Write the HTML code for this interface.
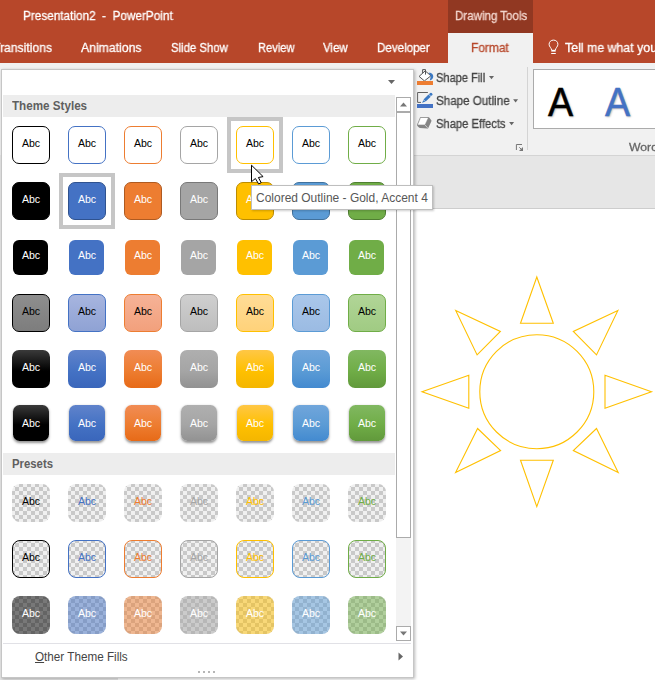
<!DOCTYPE html>
<html><head><meta charset="utf-8">
<style>
*{box-sizing:border-box;margin:0;padding:0}
html,body{width:655px;height:680px;overflow:hidden;background:#fff}
body{font-family:"Liberation Sans",sans-serif;position:relative;color:#444}
.abs{position:absolute}
#title{left:0;top:0;width:655px;height:63px;background:#B7472A}
.t{position:absolute;white-space:nowrap;transform-origin:0 0}
.t.g{will-change:transform;-webkit-text-stroke:0.3px}
#dt{left:448px;top:0;width:85px;height:33px;background:#913822}
#fmt{left:448px;top:33px;width:85px;height:31px;background:#f1f1f1}
#ribbon{left:0;top:63px;width:655px;height:93px;background:#f1f1f1;border-bottom:1px solid #d4d4d4}
#below{left:0;top:156px;width:655px;height:53px;background:#e6e6e6}
#slide{left:118px;top:208px;width:537px;height:472px;background:#fff;border-top:1px solid #cdcdcd}
#leftpane{left:0;top:155px;width:118px;height:525px;background:#e6e6e6}
.rt{position:absolute;font-size:12px;line-height:14px;color:#444;white-space:nowrap}
#popup{left:1px;top:69px;width:413px;height:609px;background:#fff;border:1px solid #c6c6c6;box-shadow:1px 1px 3px rgba(0,0,0,.28)}
.band{position:absolute;left:3px;width:392px;height:22px;background:#ededed;color:#5f5f5f;font-weight:bold;font-size:12px;line-height:22px;padding-left:9px}
.c{position:absolute;width:38px;height:38px}
.c b{position:absolute;left:0;top:0;width:38px;height:38px;border-radius:7px;overflow:hidden;font-weight:normal}
.c span{position:absolute;left:0;top:0;width:38px;text-align:center;font-size:11px;line-height:34px;transform:scaleX(0.9595)}
.c b.ck{border-radius:8px;background-color:#f0f0f0;background-image:linear-gradient(45deg,#c9c9c9 25%,transparent 25%,transparent 75%,#c9c9c9 75%),linear-gradient(45deg,#c9c9c9 25%,transparent 25%,transparent 75%,#c9c9c9 75%);background-size:8px 8px;background-position:3px -1px,7px 3px;background-origin:border-box}
.c i{position:absolute;left:0;top:0;right:0;bottom:0}
.hov{position:absolute;width:56px;height:56px;border:4px solid #c6c6c6;background:#fff}
</style></head><body>
<div id="title" class="abs"></div>
<div id="dt" class="abs"></div>
<div id="fmt" class="abs"></div>
<div id="ribbon" class="abs"></div>
<div id="below" class="abs"></div>
<div id="leftpane" class="abs"></div>
<div id="slide" class="abs"></div>

<div class="abs" style="left:527px;top:67px;width:1px;height:83px;background:#d4d4d4"></div>
<div class="abs" style="left:533px;top:69px;width:130px;height:60px;background:#fff;border:1px solid #ababab"></div>
<div class="abs" style="left:547.6px;top:79px;font-size:40px;line-height:46px;color:#000;-webkit-text-stroke:0.5px #000;text-shadow:1px 1px 2px rgba(0,0,0,.3);transform:scaleX(.94);transform-origin:0 0">A</div>
<div class="abs" style="left:604.8px;top:79px;font-size:40px;line-height:46px;color:#4472C4;-webkit-text-stroke:0.5px #4472C4;text-shadow:1px 1px 2px rgba(0,0,0,.3);transform:scaleX(.94);transform-origin:0 0">A</div>


<!-- ribbon icons -->
<svg class="abs" style="left:415px;top:67px" width="22" height="64" viewBox="415 67 22 64">
<!-- shape fill -->
<polygon points="425.2,70.9 430.9,75.8 424.4,80.9 419.1,76.4" fill="#fff" stroke="#555" stroke-width="1" stroke-linejoin="round"/>
<path d="M422.6,73.2 L422.6,69.6 L425.5,69.6 L425.5,74.6" fill="none" stroke="#555" stroke-width="1"/>
<path d="M428.6,72.8 C431.8,72.6 433.6,74.8 433.2,77 C432.9,78.8 431.6,79.9 429.8,80.5 C430.2,78.6 430.5,77.6 430.8,76 Z" fill="#3a78c3"/>
<rect x="417" y="81" width="16" height="4" fill="#ED7D31"/>
<!-- shape outline -->
<path d="M427.9,92.5 L417.6,92.5 L417.6,102.4 L421,102.4" fill="none" stroke="#606060" stroke-width="1"/>
<path d="M421.9,102.8 L423.7,99.9 L425.2,101.7 Z" fill="#3a78c3"/>
<path d="M424.6,100.5 L429.6,95.6" stroke="#3a78c3" stroke-width="3.1" fill="none"/>
<circle cx="430.9" cy="94.2" r="1.55" fill="#3a78c3"/>
<rect x="417" y="104" width="16" height="4" fill="#4472C4"/>
<!-- shape effects -->
<path d="M417.2,124.2 L420,117.6 Q420.3,117 421,117 L428,117 Q428.7,117 429.2,117.6 L431.3,120.3 Q431.7,120.8 431.3,121.5 L428.3,127.9 Q428,128.6 427.3,128.5 L419.8,127.9 Q419,127.8 418.3,127 L417.3,125.7 Q416.8,125 417.2,124.2 Z" fill="#858585"/>
<path d="M418.1,124.5 L420.8,118 L427.8,118 L424.8,124.5 Z" fill="#fff" stroke="#fff" stroke-width="0.4" stroke-linejoin="round"/>
<path d="M425.1,125 L427.7,127.9" stroke="#e8e8e8" stroke-width="0.7"/>
</svg>
<svg class="abs" style="left:486px;top:70px" width="36" height="60" viewBox="486 70 36 60" fill="#666">
<polygon points="489,76 494,76 491.5,79.2"/>
<polygon points="513.1,99.2 518.1,99.2 515.6,102.4"/>
<polygon points="509.1,122 514.1,122 511.6,125.2"/>
</svg>
<svg class="abs" style="left:515px;top:143px" width="10" height="10" viewBox="515 143 10 10" fill="none" stroke="#777" stroke-width="1">
<path d="M516.4,150 L516.4,144.5 L522,144.5"/>
<path d="M519.3,147.3 L521.5,149.5" />
<path d="M523,147 L523,151 L519,151 Z" fill="#777" stroke="none"/>
</svg>
<!-- lightbulb -->
<svg class="abs" style="left:546px;top:37px" width="16" height="20" viewBox="546 37 16 20" fill="none" stroke="#fff" stroke-width="1">
<path d="M551.6,50 C551.4,47.8 549.1,46.8 549.1,44.3 C549.1,41.8 551,40.1 553.5,40.1 C556,40.1 557.9,41.8 557.9,44.3 C557.9,46.8 555.6,47.8 555.4,50"/>
<rect x="551.3" y="49.8" width="4.4" height="1.8" fill="#fff" stroke="none"/>
<path d="M551.2,53.5 L555.8,53.5"/>
</svg>
<svg class="abs" style="left:400px;top:260px" width="255" height="260" viewBox="400 260 255 260" fill="none" stroke="#FFC000" stroke-width="1.1">
<circle cx="536.8" cy="391.7" r="57"/>
<polygon points="536.8,277 520.5,323.3 553.3,323.3"/>
<polygon points="536.8,506.6 520.5,460.3 553.3,460.3"/>
<polygon points="422,391.7 468.8,375.3 468.8,408.2"/>
<polygon points="651.5,391.7 605,375.3 605,408.2"/>
<polygon points="455.7,310.5 500.4,331.5 477.1,354.9"/>
<polygon points="617.9,310.5 573.3,331.5 596.5,354.9"/>
<polygon points="455.6,472.6 500.6,450.6 477.6,428.5"/>
<polygon points="618.2,472.6 573.3,450.6 596.5,428.5"/>
</svg>

<div id="popup" class="abs"></div>
<div class="band" style="top:95px"></div>
<div class="band" style="top:453px"></div>
<div class="hov" style="left:227px;top:117px"></div>
<div class="hov" style="left:59px;top:173px"></div>
<div class="c" style="left:12px;top:126px"><b class="" style="background:#fff;border:1px solid #000000"></b><span style="color:#000">Abc</span></div>
<div class="c" style="left:68px;top:126px"><b class="" style="background:#fff;border:1px solid #4472C4"></b><span style="color:#000">Abc</span></div>
<div class="c" style="left:124px;top:126px"><b class="" style="background:#fff;border:1px solid #ED7D31"></b><span style="color:#000">Abc</span></div>
<div class="c" style="left:180px;top:126px"><b class="" style="background:#fff;border:1px solid #A5A5A5"></b><span style="color:#000">Abc</span></div>
<div class="c" style="left:236px;top:126px"><b class="" style="background:#fff;border:1px solid #FFC000"></b><span style="color:#000">Abc</span></div>
<div class="c" style="left:292px;top:126px"><b class="" style="background:#fff;border:1px solid #5B9BD5"></b><span style="color:#000">Abc</span></div>
<div class="c" style="left:348px;top:126px"><b class="" style="background:#fff;border:1px solid #70AD47"></b><span style="color:#000">Abc</span></div>
<div class="c" style="left:12px;top:182px"><b class="" style="background:#000000;border:1px solid #000000"></b><span style="color:#fff">Abc</span></div>
<div class="c" style="left:68px;top:182px"><b class="" style="background:#4472C4;border:1px solid #2F528F"></b><span style="color:#fff">Abc</span></div>
<div class="c" style="left:124px;top:182px"><b class="" style="background:#ED7D31;border:1px solid #AE5A21"></b><span style="color:#fff">Abc</span></div>
<div class="c" style="left:180px;top:182px"><b class="" style="background:#A5A5A5;border:1px solid #787878"></b><span style="color:#fff">Abc</span></div>
<div class="c" style="left:236px;top:182px"><b class="" style="background:#FFC000;border:1px solid #BC8C00"></b><span style="color:#fff">Abc</span></div>
<div class="c" style="left:292px;top:182px"><b class="" style="background:#5B9BD5;border:1px solid #41719C"></b><span style="color:#fff">Abc</span></div>
<div class="c" style="left:348px;top:182px"><b class="" style="background:#70AD47;border:1px solid #507E32"></b><span style="color:#fff">Abc</span></div>
<div class="c" style="left:12px;top:238px"><b class="" style="left:1.2px;top:1.7px;width:35.3px;height:35px;border-radius:6px;background:#000000"></b><span style="color:#fff">Abc</span></div>
<div class="c" style="left:68px;top:238px"><b class="" style="left:1.2px;top:1.7px;width:35.3px;height:35px;border-radius:6px;background:#4472C4"></b><span style="color:#fff">Abc</span></div>
<div class="c" style="left:124px;top:238px"><b class="" style="left:1.2px;top:1.7px;width:35.3px;height:35px;border-radius:6px;background:#ED7D31"></b><span style="color:#fff">Abc</span></div>
<div class="c" style="left:180px;top:238px"><b class="" style="left:1.2px;top:1.7px;width:35.3px;height:35px;border-radius:6px;background:#A5A5A5"></b><span style="color:#fff">Abc</span></div>
<div class="c" style="left:236px;top:238px"><b class="" style="left:1.2px;top:1.7px;width:35.3px;height:35px;border-radius:6px;background:#FFC000"></b><span style="color:#fff">Abc</span></div>
<div class="c" style="left:292px;top:238px"><b class="" style="left:1.2px;top:1.7px;width:35.3px;height:35px;border-radius:6px;background:#5B9BD5"></b><span style="color:#fff">Abc</span></div>
<div class="c" style="left:348px;top:238px"><b class="" style="left:1.2px;top:1.7px;width:35.3px;height:35px;border-radius:6px;background:#70AD47"></b><span style="color:#fff">Abc</span></div>
<div class="c" style="left:12px;top:294px"><b class="" style="background:linear-gradient(#8e8e8e,#7d7d7d);border:1px solid #000000"></b><span style="color:#000">Abc</span></div>
<div class="c" style="left:68px;top:294px"><b class="" style="background:linear-gradient(#a7b5df,#8fa2d4);border:1px solid #4472C4"></b><span style="color:#000">Abc</span></div>
<div class="c" style="left:124px;top:294px"><b class="" style="background:linear-gradient(#f6b297,#f2a07c);border:1px solid #ED7D31"></b><span style="color:#000">Abc</span></div>
<div class="c" style="left:180px;top:294px"><b class="" style="background:linear-gradient(#cfcfcf,#bdbdbd);border:1px solid #A5A5A5"></b><span style="color:#000">Abc</span></div>
<div class="c" style="left:236px;top:294px"><b class="" style="background:linear-gradient(#ffdc96,#ffd27a);border:1px solid #FFC000"></b><span style="color:#000">Abc</span></div>
<div class="c" style="left:292px;top:294px"><b class="" style="background:linear-gradient(#aac7ea,#9bbbe3);border:1px solid #5B9BD5"></b><span style="color:#000">Abc</span></div>
<div class="c" style="left:348px;top:294px"><b class="" style="background:linear-gradient(#b1d597,#a0cb83);border:1px solid #70AD47"></b><span style="color:#000">Abc</span></div>
<div class="c" style="left:12px;top:350px"><b class="" style="background:linear-gradient(#3a3a3a 0%,#000 55%,#000000 100%)"></b><span style="color:#fff">Abc</span></div>
<div class="c" style="left:68px;top:350px"><b class="" style="background:linear-gradient(#6083cb 0%,#4472C4 55%,#3a66bb 100%)"></b><span style="color:#fff">Abc</span></div>
<div class="c" style="left:124px;top:350px"><b class="" style="background:linear-gradient(#f18c55 0%,#ED7D31 55%,#e76a17 100%)"></b><span style="color:#fff">Abc</span></div>
<div class="c" style="left:180px;top:350px"><b class="" style="background:linear-gradient(#afafaf 0%,#A5A5A5 55%,#929292 100%)"></b><span style="color:#fff">Abc</span></div>
<div class="c" style="left:236px;top:350px"><b class="" style="background:linear-gradient(#ffc746 0%,#FFC000 55%,#f4b600 100%)"></b><span style="color:#fff">Abc</span></div>
<div class="c" style="left:292px;top:350px"><b class="" style="background:linear-gradient(#71a6db 0%,#5B9BD5 55%,#438ad0 100%)"></b><span style="color:#fff">Abc</span></div>
<div class="c" style="left:348px;top:350px"><b class="" style="background:linear-gradient(#81b861 0%,#70AD47 55%,#61993b 100%)"></b><span style="color:#fff">Abc</span></div>
<div class="c" style="left:12px;top:406px"><b class="" style="left:0.6px;top:-1px;width:36.8px;height:36px;border-radius:6.5px;background:linear-gradient(#3a3a3a 0%,#000 55%,#000000 100%);box-shadow:0 1.5px 2.5px rgba(0,0,0,.42)"></b><span style="color:#fff">Abc</span></div>
<div class="c" style="left:68px;top:406px"><b class="" style="left:0.6px;top:-1px;width:36.8px;height:36px;border-radius:6.5px;background:linear-gradient(#6083cb 0%,#4472C4 55%,#3a66bb 100%);box-shadow:0 1.5px 2.5px rgba(0,0,0,.42)"></b><span style="color:#fff">Abc</span></div>
<div class="c" style="left:124px;top:406px"><b class="" style="left:0.6px;top:-1px;width:36.8px;height:36px;border-radius:6.5px;background:linear-gradient(#f18c55 0%,#ED7D31 55%,#e76a17 100%);box-shadow:0 1.5px 2.5px rgba(0,0,0,.42)"></b><span style="color:#fff">Abc</span></div>
<div class="c" style="left:180px;top:406px"><b class="" style="left:0.6px;top:-1px;width:36.8px;height:36px;border-radius:6.5px;background:linear-gradient(#afafaf 0%,#A5A5A5 55%,#929292 100%);box-shadow:0 1.5px 2.5px rgba(0,0,0,.42)"></b><span style="color:#fff">Abc</span></div>
<div class="c" style="left:236px;top:406px"><b class="" style="left:0.6px;top:-1px;width:36.8px;height:36px;border-radius:6.5px;background:linear-gradient(#ffc746 0%,#FFC000 55%,#f4b600 100%);box-shadow:0 1.5px 2.5px rgba(0,0,0,.42)"></b><span style="color:#fff">Abc</span></div>
<div class="c" style="left:292px;top:406px"><b class="" style="left:0.6px;top:-1px;width:36.8px;height:36px;border-radius:6.5px;background:linear-gradient(#71a6db 0%,#5B9BD5 55%,#438ad0 100%);box-shadow:0 1.5px 2.5px rgba(0,0,0,.42)"></b><span style="color:#fff">Abc</span></div>
<div class="c" style="left:348px;top:406px"><b class="" style="left:0.6px;top:-1px;width:36.8px;height:36px;border-radius:6.5px;background:linear-gradient(#81b861 0%,#70AD47 55%,#61993b 100%);box-shadow:0 1.5px 2.5px rgba(0,0,0,.42)"></b><span style="color:#fff">Abc</span></div>
<div class="c" style="left:12px;top:484px"><b class="ck" style=""></b><span style="color:#000000">Abc</span></div>
<div class="c" style="left:68px;top:484px"><b class="ck" style=""></b><span style="color:#4472C4">Abc</span></div>
<div class="c" style="left:124px;top:484px"><b class="ck" style=""></b><span style="color:#ED7D31">Abc</span></div>
<div class="c" style="left:180px;top:484px"><b class="ck" style=""></b><span style="color:#A5A5A5">Abc</span></div>
<div class="c" style="left:236px;top:484px"><b class="ck" style=""></b><span style="color:#FFC000">Abc</span></div>
<div class="c" style="left:292px;top:484px"><b class="ck" style=""></b><span style="color:#5B9BD5">Abc</span></div>
<div class="c" style="left:348px;top:484px"><b class="ck" style=""></b><span style="color:#70AD47">Abc</span></div>
<div class="c" style="left:12px;top:540px"><b class="ck" style="border:1px solid #000000"></b><span style="color:#000000">Abc</span></div>
<div class="c" style="left:68px;top:540px"><b class="ck" style="border:1px solid #4472C4"></b><span style="color:#4472C4">Abc</span></div>
<div class="c" style="left:124px;top:540px"><b class="ck" style="border:1px solid #ED7D31"></b><span style="color:#ED7D31">Abc</span></div>
<div class="c" style="left:180px;top:540px"><b class="ck" style="border:1px solid #A5A5A5"></b><span style="color:#A5A5A5">Abc</span></div>
<div class="c" style="left:236px;top:540px"><b class="ck" style="border:1px solid #FFC000"></b><span style="color:#FFC000">Abc</span></div>
<div class="c" style="left:292px;top:540px"><b class="ck" style="border:1px solid #5B9BD5"></b><span style="color:#5B9BD5">Abc</span></div>
<div class="c" style="left:348px;top:540px"><b class="ck" style="border:1px solid #70AD47"></b><span style="color:#70AD47">Abc</span></div>
<div class="c" style="left:12px;top:596px"><b class="ck" style=""><i style="background:rgba(0,0,0,0.5)"></i></b><span style="color:#fff">Abc</span></div>
<div class="c" style="left:68px;top:596px"><b class="ck" style=""><i style="background:rgba(68,114,196,0.5)"></i></b><span style="color:#fff">Abc</span></div>
<div class="c" style="left:124px;top:596px"><b class="ck" style=""><i style="background:rgba(237,125,49,0.5)"></i></b><span style="color:#fff">Abc</span></div>
<div class="c" style="left:180px;top:596px"><b class="ck" style=""><i style="background:rgba(165,165,165,0.5)"></i></b><span style="color:#fff">Abc</span></div>
<div class="c" style="left:236px;top:596px"><b class="ck" style=""><i style="background:rgba(255,192,0,0.5)"></i></b><span style="color:#fff">Abc</span></div>
<div class="c" style="left:292px;top:596px"><b class="ck" style=""><i style="background:rgba(91,155,213,0.5)"></i></b><span style="color:#fff">Abc</span></div>
<div class="c" style="left:348px;top:596px"><b class="ck" style=""><i style="background:rgba(112,173,71,0.5)"></i></b><span style="color:#fff">Abc</span></div>
<!-- scrollbar -->
<div class="abs" style="left:396px;top:97px;width:15px;height:544px;background:#f3f3f3"></div>
<div class="abs" style="left:396px;top:97px;width:15px;height:15px;background:#fff;border:1px solid #ababab"></div>
<div class="abs" style="left:396px;top:112px;width:15px;height:426px;background:#fff;border:1px solid #ababab"></div>
<div class="abs" style="left:396px;top:626px;width:15px;height:15px;background:#fff;border:1px solid #ababab"></div>
<svg class="abs" style="left:396px;top:97px" width="15" height="15"><polygon points="4,9.5 11,9.5 7.5,5.5" fill="#777"/></svg>
<svg class="abs" style="left:396px;top:626px" width="15" height="15"><polygon points="4,5.5 11,5.5 7.5,9.5" fill="#777"/></svg>
<svg class="abs" style="left:387px;top:78px" width="9" height="8"><polygon points="1,2 8,2 4.5,6" fill="#666"/></svg>
<div class="abs" style="left:3px;top:643px;width:408px;height:1px;background:#e1e1e6"></div>
<svg class="abs" style="left:398px;top:652px" width="6" height="9"><polygon points="0.5,0.5 5,4.5 0.5,8.5" fill="#666"/></svg>
<div class="abs" style="left:198px;top:671px;width:17px;height:2px;background-image:linear-gradient(90deg,#b6b6b6 2px,transparent 2px);background-size:5px 2px"></div>

<!-- tooltip -->
<div class="abs" style="left:251px;top:185px;width:182px;height:25px;background:#fff;border:1px solid #bebebe;box-shadow:1px 1px 2px rgba(0,0,0,.2);font-size:12px;line-height:23px;color:#575757;padding-left:5px;white-space:nowrap"></div>
<div class="t g" style="left:23.4px;top:7.67px;font-size:12.5px;line-height:16px;font-weight:normal;color:#fff;transform:scaleX(0.9408)">Presentation2&nbsp; -&nbsp; PowerPoint</div>
<div class="t g" style="left:-6.6px;top:39.87px;font-size:12.5px;line-height:16px;font-weight:normal;color:#fff;transform:scaleX(0.9724)">Transitions</div>
<div class="t g" style="left:81.3px;top:39.87px;font-size:12.5px;line-height:16px;font-weight:normal;color:#fff;transform:scaleX(0.9783)">Animations</div>
<div class="t g" style="left:171.0px;top:39.87px;font-size:12.5px;line-height:16px;font-weight:normal;color:#fff;transform:scaleX(0.9097)">Slide Show</div>
<div class="t g" style="left:257.6px;top:39.87px;font-size:12.5px;line-height:16px;font-weight:normal;color:#fff;transform:scaleX(0.8902)">Review</div>
<div class="t g" style="left:323.2px;top:39.87px;font-size:12.5px;line-height:16px;font-weight:normal;color:#fff;transform:scaleX(0.9191)">View</div>
<div class="t g" style="left:377.3px;top:39.87px;font-size:12.5px;line-height:16px;font-weight:normal;color:#fff;transform:scaleX(0.9266)">Developer</div>
<div class="t g" style="left:454.5px;top:7.67px;font-size:12.5px;line-height:16px;font-weight:normal;color:#F3D6CE;transform:scaleX(0.9223)">Drawing Tools</div>
<div class="t g" style="left:471.0px;top:39.87px;font-size:12.5px;line-height:16px;font-weight:normal;color:#B7472A;transform:scaleX(0.9547)">Format</div>
<div class="t g" style="left:564.9px;top:39.87px;font-size:12.5px;line-height:16px;font-weight:normal;color:#fff;transform:scaleX(0.9881)">Tell me what you</div>
<div class="t g" style="left:436.2px;top:69.94px;font-size:12px;line-height:16px;font-weight:normal;color:#444;transform:scaleX(0.9218)">Shape Fill</div>
<div class="t g" style="left:436.2px;top:93.04px;font-size:12px;line-height:16px;font-weight:normal;color:#444;transform:scaleX(0.9676)">Shape Outline</div>
<div class="t g" style="left:436.2px;top:116.04px;font-size:12px;line-height:16px;font-weight:normal;color:#444;transform:scaleX(0.9329)">Shape Effects</div>
<div class="t" style="left:35.2px;top:648.64px;font-size:12px;line-height:16px;font-weight:normal;color:#444;transform:scaleX(0.9742)"><u>O</u>ther Theme Fills</div>
<div class="t" style="left:12.1px;top:98.34px;font-size:12px;line-height:16px;font-weight:bold;color:#5f5f5f;transform:scaleX(0.9706)">Theme Styles</div>
<div class="t" style="left:12.1px;top:455.54px;font-size:12px;line-height:16px;font-weight:bold;color:#5f5f5f;transform:scaleX(0.9452)">Presets</div>
<div class="t" style="left:256.1px;top:190.14px;font-size:12px;line-height:16px;font-weight:normal;color:#575757;transform:scaleX(0.9983)">Colored Outline - Gold, Accent 4</div>
<div class="t g" style="left:629.2px;top:139.52px;font-size:11.5px;line-height:15px;font-weight:normal;color:#666;transform:scaleX(1.0603)">WordArt</div>
<!-- cursor -->
<svg class="abs" style="left:250px;top:164px" width="16" height="22" viewBox="0 0 16 22"><path d="M1.5,1.2 L1.5,17.7 L5.4,14.5 L8.6,19.9 L11.2,18.7 L8.4,13.5 L13.1,12.6 Z" fill="#fff" stroke="#000" stroke-width="1" stroke-linejoin="miter"/></svg>
</body></html>
